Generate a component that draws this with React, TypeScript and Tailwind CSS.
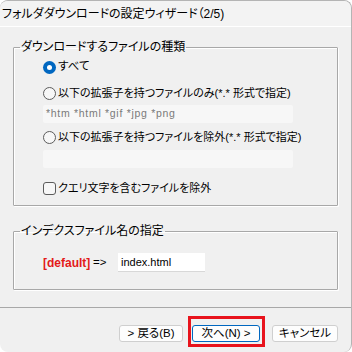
import React from "react";

function Radio({ checked }: { checked?: boolean }) {
  return checked ? (
    <span className="flex h-[13px] w-[13px] shrink-0 items-center justify-center rounded-full bg-[#0067c0]">
      <span className="h-[5px] w-[5px] rounded-full bg-white" />
    </span>
  ) : (
    <span className="h-[13px] w-[13px] shrink-0 rounded-full border border-[#5c5c5c] bg-[#f7f7f7]" />
  );
}

function Group({ title, children, className }: { title: string; children: React.ReactNode; className?: string }) {
  return (
    <fieldset
      className={
        "mx-[13px] rounded-[1px] border border-[#a8a8a8] px-[6px] shadow-[1px_1px_0_#ffffff,inset_1px_1px_0_#ffffff] " +
        (className ?? "")
      }
    >
      <legend className="px-[1px] text-[12px] leading-[16px]">{title}</legend>
      {children}
    </fieldset>
  );
}

export default function App() {
  return (
    <div className="h-[352px] w-[352px] overflow-hidden bg-white font-['Liberation_Sans','Noto_Sans_CJK_JP',sans-serif] text-[12px] text-black [font-feature-settings:'palt']">
      <div className="flex h-[352px] w-[352px] flex-col overflow-hidden rounded-[8px] border-t border-r border-[#b4b4b4] bg-[#f0f0f0]">
        <div className="flex h-[26px] shrink-0 items-center whitespace-nowrap border-b border-white bg-[#f3f3f3] pl-[2px] text-[12px]">
          フォルダダウンロードの設定ウィザード（2/5)
        </div>

        <Group title="ダウンロードするファイルの種類" className="mt-[12px] pb-[7px]">
          <div className="flex flex-col whitespace-nowrap pl-[23px] text-[11px]">
            <div className="mt-[2px] flex h-[20px] items-center gap-[2px] text-[11.5px]">
              <Radio checked />
              <span>すべて</span>
            </div>
            <div className="mt-[6px] flex h-[20px] items-center gap-[2px]">
              <Radio />
              <span>以下の拡張子を持つファイルのみ(*.* 形式で指定)</span>
            </div>
            <div className="mt-[2px] flex h-[18px] w-[250px] items-center rounded-[2px] bg-[#f7f7f7] pl-[3px] text-[10.5px] tracking-[0.7px] text-[#7a7a7a]">
              *htm *html *gif *jpg *png
            </div>
            <div className="mt-[4px] flex h-[20px] items-center gap-[2px]">
              <Radio />
              <span>以下の拡張子を持つファイルを除外(*.* 形式で指定)</span>
            </div>
            <div className="mt-[3px] h-[18px] w-[250px] rounded-[2px] bg-[#f7f7f7]" />
            <div className="mt-[10px] flex h-[20px] items-center gap-[2px]">
              <span className="h-[13px] w-[13px] shrink-0 rounded-[3px] border border-[#5c5c5c] bg-[#f7f7f7]" />
              <span>クエリ文字を含むファイルを除外</span>
            </div>
          </div>
        </Group>

        <Group title="インデクスファイル名の指定" className="mt-[17px] pb-[17px]">
          <div className="mt-[14px] flex h-[19px] items-center whitespace-nowrap pl-[23px] text-[11.5px]">
            <span className="w-[50px] shrink-0 text-[12px] font-bold text-[#e31a1a]">[default]</span>
            <span className="w-[25px] shrink-0">=&gt;</span>
            <div className="flex h-[19px] w-[87px] items-center border-b border-[#d8d8d8] bg-white pl-[3px] text-[11px]">
              index.html
            </div>
          </div>
        </Group>

        <div className="mt-[17px] h-[1px] shrink-0 bg-[#a8a8a8]" />

        <div className="mt-[17px] flex items-center justify-end whitespace-nowrap pr-[13px] text-[11.5px]">
          <div className="flex h-[17px] w-[64px] items-center justify-center rounded-[3px] border border-[#cfcfcf] bg-[#fdfdfd]">
            &gt; 戻る(B)
          </div>
          <div className="relative ml-[9px] flex h-[17px] w-[68px] items-center justify-center rounded-[3px] border border-[#0067c0] bg-[#fdfdfd]">
            次へ(N) &gt;
            <div className="pointer-events-none absolute -top-[10px] -bottom-[6px] -left-[5px] -right-[6px] border-[3px] border-[#e8131c]" />
          </div>
          <div className="ml-[12px] flex h-[17px] w-[66px] items-center justify-center rounded-[3px] border border-[#cfcfcf] bg-[#fdfdfd]">
            キャンセル
          </div>
        </div>
      </div>
    </div>
  );
}
